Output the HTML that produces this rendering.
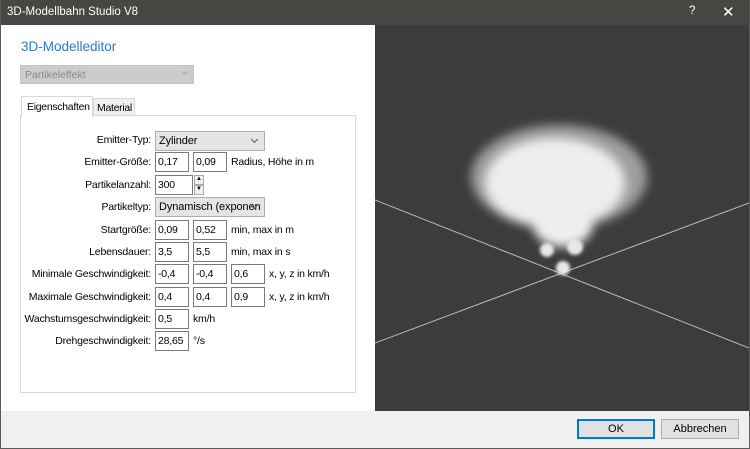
<!DOCTYPE html>
<html><head><meta charset="utf-8"><style>
*{margin:0;padding:0;box-sizing:border-box}
body{width:750px;height:449px;overflow:hidden;background:#f0f0f0;font-family:"Liberation Sans",sans-serif;font-size:10.5px;color:#000;position:relative}
.a{position:absolute}
.title{left:0;top:0;width:750px;height:25px;background:#474643;color:#fff;font-size:11.5px;padding:6px 0 0 7px}
.left{left:1px;top:25px;width:374px;height:386px;background:#fff}
.in{position:absolute;height:20px;border:1px solid #7a7a7a;background:#fff;padding:3px 0 0 2px;width:34px;letter-spacing:-0.2px}
.lb{position:absolute;right:599px;text-align:right;white-space:nowrap;letter-spacing:-0.2px}
.u{position:absolute;white-space:nowrap;letter-spacing:-0.2px}
.cb{position:absolute;left:155px;width:110px;height:20px;border:1px solid #adadad;background:#e5e5e5;padding:3px 0 0 3px;font-size:11px;letter-spacing:-0.1px}
.cb:after{content:"";position:absolute;right:7px;top:5px;width:4px;height:4px;border-right:1px solid #555;border-bottom:1px solid #555;transform:rotate(45deg)}
.btn{position:absolute;top:419px;width:78px;height:20px;border:1px solid #adadad;background:#e1e1e1;text-align:center;padding-top:3px;font-size:11px}
</style></head><body>
<div class="a title">3D-Modellbahn Studio V8<span class="a" style="left:689px;top:5px">?</span><span class="a" style="left:722px;top:3px;font-size:15px">✕</span></div>
<div class="a left"></div>
<div class="a" style="left:21px;top:39px;font-size:13.5px;color:#2b79c2">3D-Modelleditor</div>
<div class="a" style="left:20px;top:65px;width:174px;height:19px;background:#cccccc;border:1px solid #c4c4c4;color:#8a8a8a;padding:3px 0 0 4px">Partikeleffekt<span class="a" style="right:6px;top:4px;width:4px;height:4px;border-right:1px solid #aaa;border-bottom:1px solid #aaa;transform:rotate(45deg)"></span></div>
<div class="a" style="left:20px;top:115px;width:336px;height:278px;border:1px solid #d9d9d9;background:#fff"></div>
<div class="a" style="left:93px;top:98px;width:42px;height:18px;border:1px solid #d9d9d9;background:#f0f0f0;padding:3px 0 0 3px;letter-spacing:-0.3px">Material</div>
<div class="a" style="left:21px;top:96px;width:72px;height:21px;border:1px solid #d9d9d9;border-bottom:none;background:#fff;padding:4px 0 0 5px;letter-spacing:-0.3px">Eigenschaften</div>

<div class="lb" style="top:134px">Emitter-Typ:</div><div class="cb" style="top:131px;width:110px">Zylinder</div>
<div class="lb" style="top:156px">Emitter-Größe:</div><div class="in" style="left:155px;top:152px">0,17</div><div class="in" style="left:193px;top:152px">0,09</div><div class="u" style="left:231px;top:156px">Radius, Höhe in m</div>
<div class="lb" style="top:179px">Partikelanzahl:</div><div class="in" style="left:155px;top:175px;width:38px">300</div><div class="a" style="left:194px;top:175px;width:10px;height:10px;border:1px solid #aaa;background:#f0f0f0;font-size:6px;text-align:center">▲</div><div class="a" style="left:194px;top:185px;width:10px;height:10px;border:1px solid #aaa;background:#f0f0f0;font-size:6px;text-align:center">▼</div>
<div class="lb" style="top:201px">Partikeltyp:</div><div class="cb" style="top:197px;overflow:hidden;white-space:nowrap">Dynamisch (exponen</div>
<div class="lb" style="top:224px">Startgröße:</div><div class="in" style="left:155px;top:220px">0,09</div><div class="in" style="left:193px;top:220px">0,52</div><div class="u" style="left:231px;top:224px">min, max in m</div>
<div class="lb" style="top:246px">Lebensdauer:</div><div class="in" style="left:155px;top:242px">3,5</div><div class="in" style="left:193px;top:242px">5,5</div><div class="u" style="left:231px;top:246px">min, max in s</div>
<div class="a" style="left:0;top:260px;width:155px;height:90px;overflow:hidden">
<div class="lb" style="right:4px;top:8px">Minimale Geschwindigkeit:</div>
<div class="lb" style="right:4px;top:31px">Maximale Geschwindigkeit:</div>
<div class="lb" style="right:4px;top:53px">Wachstumsgeschwindigkeit:</div>
<div class="lb" style="right:4px;top:75px">Drehgeschwindigkeit:</div></div>
<div class="in" style="left:155px;top:264px">-0,4</div><div class="in" style="left:193px;top:264px">-0,4</div><div class="in" style="left:231px;top:264px">0,6</div><div class="u" style="left:269px;top:268px">x, y, z in km/h</div>
<div class="in" style="left:155px;top:287px">0,4</div><div class="in" style="left:193px;top:287px">0,4</div><div class="in" style="left:231px;top:287px">0,9</div><div class="u" style="left:269px;top:291px">x, y, z in km/h</div>
<div class="in" style="left:155px;top:309px">0,5</div><div class="u" style="left:193px;top:313px">km/h</div>
<div class="in" style="left:155px;top:331px">28,65</div><div class="u" style="left:193px;top:335px">°/s</div>

<svg class="a" style="left:375px;top:25px" width="374" height="386">
<defs><filter id="b" x="-50%" y="-50%" width="200%" height="200%"><feGaussianBlur stdDeviation="5"/></filter><filter id="c"><feGaussianBlur stdDeviation="1.5"/></filter></defs>
<rect width="374" height="386" fill="#3c3c3c"/>
<line x1="0" y1="175" x2="374" y2="323" stroke="#bbb" stroke-width="1"/>
<line x1="0" y1="318" x2="374" y2="178" stroke="#bbb" stroke-width="1"/>
<g filter="url(#b)" fill="#eee">
<ellipse cx="184" cy="152" rx="88" ry="52" opacity=".55"/>
<ellipse cx="180" cy="158" rx="70" ry="45"/>
<ellipse cx="188" cy="200" rx="30" ry="22"/>
</g>
<g filter="url(#c)" fill="#e8e8e8"><circle cx="172" cy="225" r="7"/><circle cx="200" cy="222" r="8"/><circle cx="188" cy="243" r="7"/></g>
</svg>
<div class="btn" style="left:577px;border:1px solid #0078d7;box-shadow:inset 0 0 0 1px #0078d7">OK</div>
<div class="btn" style="left:661px">Abbrechen</div>
<div class="a" style="left:0;top:0;width:750px;height:449px;border:1px solid #5a5a5a;border-top:none"></div>
</body></html>
